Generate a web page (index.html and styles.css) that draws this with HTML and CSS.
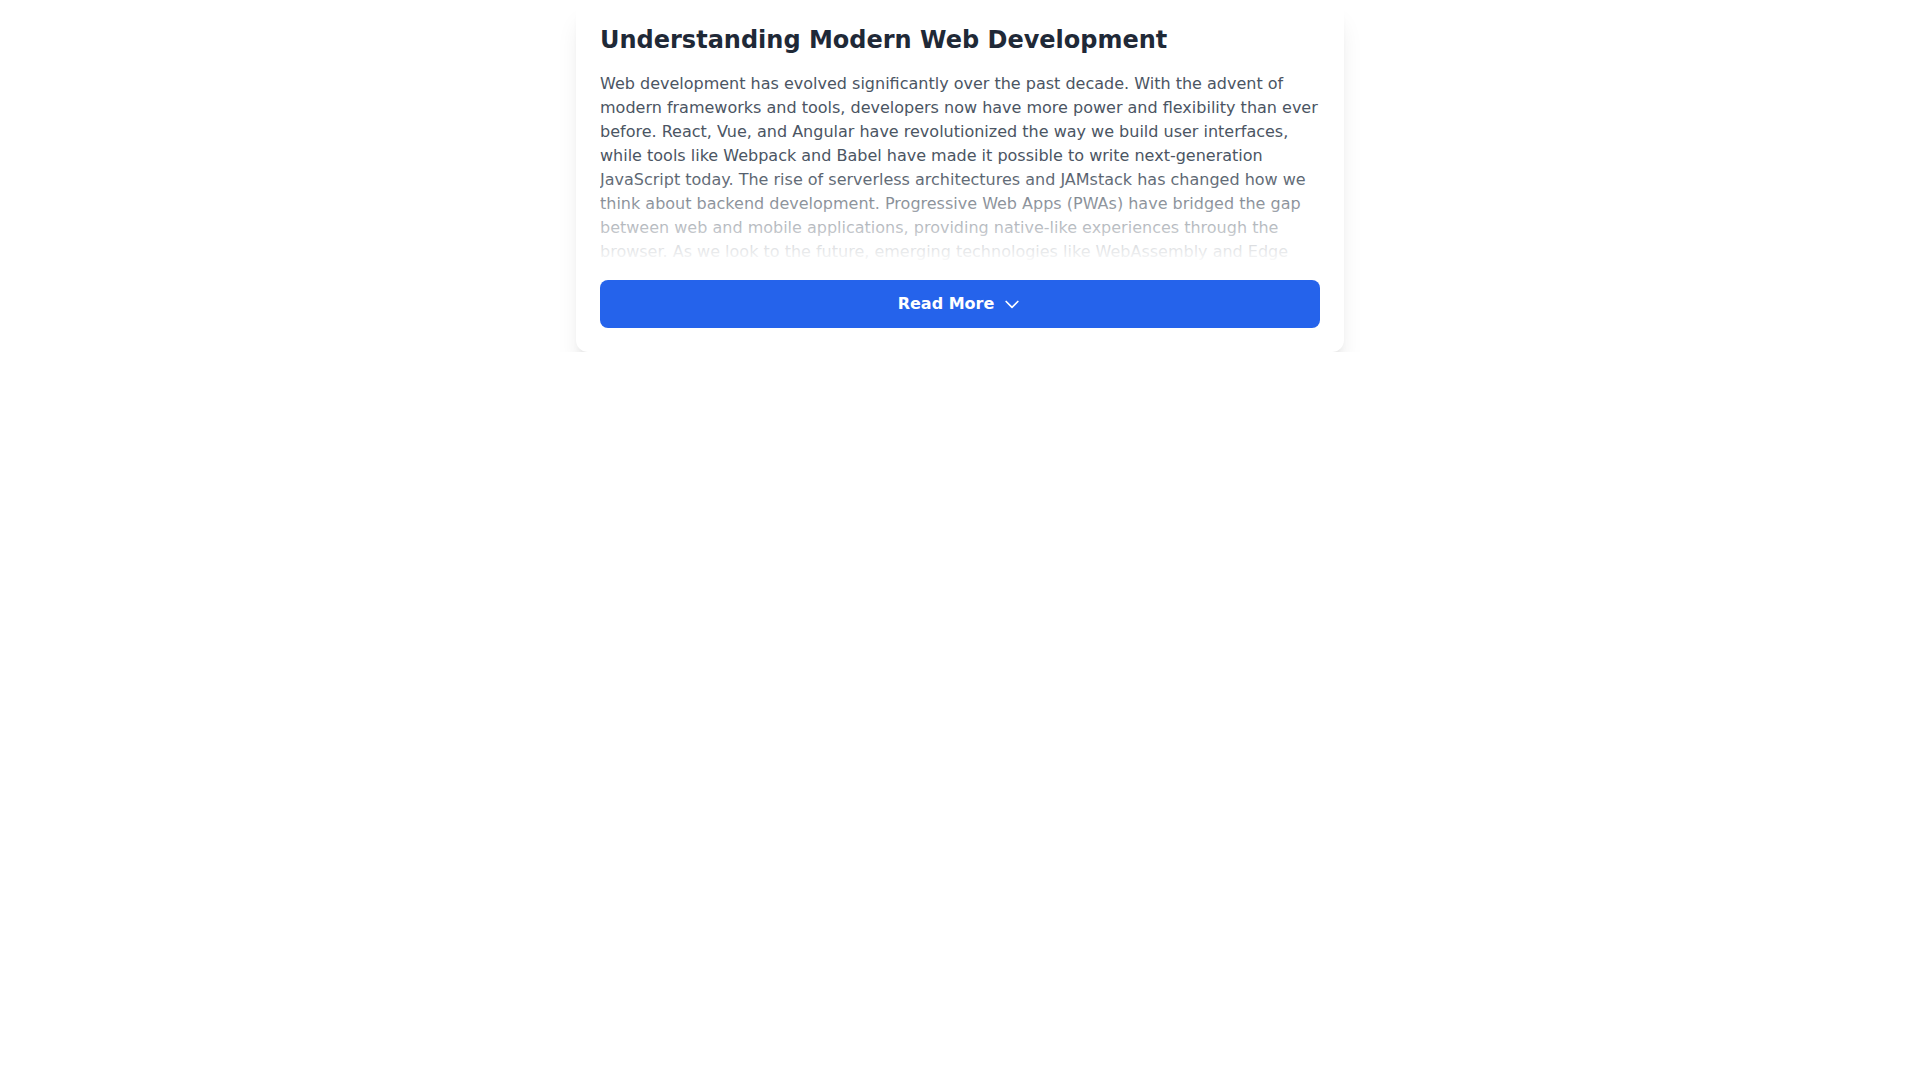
FILE: index.html
```html
<!DOCTYPE html>
<html>
<head>
    <title>Understanding Modern Web Development</title>
    <link rel="stylesheet" href="styles.css">
</head>
<body>
    <div class="article-card">
        <h2 class="article-title">Understanding Modern Web Development</h2>
        <div class="article-body" id="articleBody">
            <p>Web development has evolved significantly over the past decade. With the advent of modern frameworks and tools, developers now have more power and flexibility than ever before. React, Vue, and Angular have revolutionized the way we build user interfaces, while tools like Webpack and Babel have made it possible to write next-generation JavaScript today. The rise of serverless architectures and JAMstack has changed how we think about backend development. Progressive Web Apps (PWAs) have bridged the gap between web and mobile applications, providing native-like experiences through the browser. As we look to the future, emerging technologies like WebAssembly and Edge Computing promise to push the boundaries of what's possible on the web even further.</p>
            <div class="fade"></div>
        </div>
        <button class="read-more" onclick="toggleArticle()">
            <span id="readMoreLabel">Read More</span>
            <svg class="chevron" viewBox="0 0 24 24" fill="none" stroke="currentColor" stroke-width="2" stroke-linecap="round" stroke-linejoin="round">
                <path d="M19 9l-7 7-7-7"/>
            </svg>
        </button>
    </div>

    <script>
        let open = false;
        function toggleArticle() {
            open = !open;
            document.getElementById('articleBody').classList.toggle('expanded', open);
            document.getElementById('readMoreLabel').innerText = open ? 'Read Less' : 'Read More';
        }
    </script>
</body>
</html>
```

FILE: styles.css
```css
body {
    margin: 0;
    background: #ffffff;
    font-family: "DejaVu Sans", Verdana, sans-serif;
}
.article-card {
    max-width: 768px;
    margin: 0 auto;
    padding: 24px;
    box-sizing: border-box;
    background: #ffffff;
    border-radius: 12px;
    box-shadow: 0 20px 25px -5px rgba(0, 0, 0, 0.1), 0 8px 10px -6px rgba(0, 0, 0, 0.1);
}
.article-title {
    margin: 0 0 16px 0;
    font-size: 24px;
    line-height: 32px;
    font-weight: bold;
    color: #1f2937;
}
.article-body {
    position: relative;
    max-height: 192px;
    overflow: hidden;
}
.article-body p {
    margin: 0;
    font-size: 16px;
    line-height: 24px;
    color: #4b5563;
}
/* white fade over the clipped lines */
.fade {
    position: absolute;
    left: 0;
    right: 0;
    bottom: 0;
    height: 96px;
    background: linear-gradient(to bottom, rgba(255, 255, 255, 0), #ffffff);
}
.article-body.expanded { max-height: none; }
.article-body.expanded .fade { display: none; }
.read-more {
    display: flex;
    align-items: center;
    justify-content: center;
    gap: 8px;
    width: 100%;
    margin-top: 16px;
    padding: 12px 16px;
    border: none;
    border-radius: 8px;
    background: #2563eb;
    color: #ffffff;
    font-family: inherit;
    font-size: 16px;
    line-height: 24px;
    font-weight: bold;
    cursor: pointer;
}
.chevron {
    width: 20px;
    height: 20px;
    stroke-width: 2;
}
```
